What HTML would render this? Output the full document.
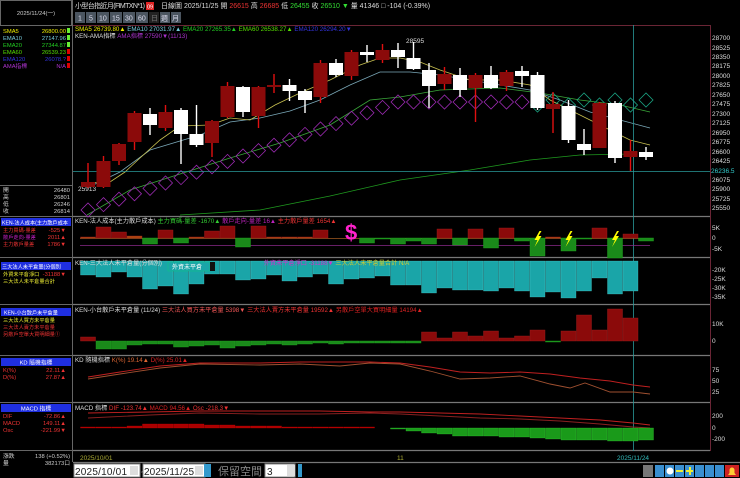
<!DOCTYPE html>
<html><head><meta charset="utf-8"><style>
html,body{margin:0;padding:0;background:#000;width:740px;height:478px;overflow:hidden}
svg{display:block;font-size:6.5px}
text{font-family:"Liberation Sans","Noto Sans CJK TC",sans-serif}
</style></head><body>
<svg id="s" width="740" height="478" viewBox="0 0 740 478" xmlns="http://www.w3.org/2000/svg">
<defs><clipPath id="lc"><rect x="0" y="0" width="72" height="478"/></clipPath></defs>
<rect width="740" height="478" fill="#000"/>
<g fill="none" stroke="#666" stroke-width="1">
<rect x="0.5" y="0.5" width="71" height="25"/>
<line x1="72.5" y1="0" x2="72.5" y2="462"/>
<line x1="0" y1="185.5" x2="72" y2="185.5"/>
<line x1="0" y1="216.5" x2="72" y2="216.5"/>
<line x1="0" y1="257.5" x2="72" y2="257.5"/>
<line x1="0" y1="304.5" x2="72" y2="304.5"/>
<line x1="0" y1="355.5" x2="72" y2="355.5"/>
<line x1="0" y1="402.5" x2="72" y2="402.5"/>
<line x1="0" y1="450.5" x2="72" y2="450.5"/>
</g>
<g stroke="#777" stroke-width="1.2">
<line x1="73" y1="216.5" x2="710" y2="216.5"/>
<line x1="73" y1="257.5" x2="710" y2="257.5"/>
<line x1="73" y1="304.5" x2="710" y2="304.5"/>
<line x1="73" y1="355.5" x2="710" y2="355.5"/>
<line x1="73" y1="402.5" x2="710" y2="402.5"/>
<line x1="73" y1="450.5" x2="710" y2="450.5"/>
<line x1="73" y1="462.5" x2="740" y2="462.5"/>
</g>
<line x1="73" y1="25.5" x2="710" y2="25.5" stroke="#6a2535"/>
<line x1="710.5" y1="25" x2="710.5" y2="451" stroke="#6a2535"/>
<g clip-path="url(#lc)" font-size="5.8">
<text x="36" y="15" fill="#ccc" text-anchor="middle">2025/11/24(一)</text>
<text x="3" y="33" fill="#ee0">SMA5</text><text x="66" y="33" fill="#ee0" text-anchor="end">26800.00</text>
<text x="3" y="40" fill="#7cd">EMA10</text><text x="66" y="40" fill="#7cd" text-anchor="end">27147.96</text>
<text x="3" y="47" fill="#2c2">EMA20</text><text x="66" y="47" fill="#2c2" text-anchor="end">27344.87</text>
<text x="3" y="54" fill="#5d0">EMA60</text><text x="66" y="54" fill="#5d0" text-anchor="end">26539.23</text>
<text x="3" y="61" fill="#33d">EMA120</text><text x="66" y="61" fill="#33d" text-anchor="end">26078.?</text>
<text x="3" y="68" fill="#a3c">AMA指標</text><text x="66" y="68" fill="#a3c" text-anchor="end">N/A</text>
<g fill="#67ee34"><rect x="67" y="28" width="3" height="5"/><rect x="67" y="35" width="3" height="5"/><rect x="67" y="42" width="3" height="5"/></g>
<g fill="#d00"><rect x="67" y="49" width="3" height="5"/><rect x="67" y="56" width="3" height="5"/><rect x="67" y="63" width="3" height="5"/></g>
<text x="3" y="192" fill="#ccc">開</text><text x="70" y="192" fill="#ccc" text-anchor="end">26480</text>
<text x="3" y="199" fill="#ccc">高</text><text x="70" y="199" fill="#ccc" text-anchor="end">26801</text>
<text x="3" y="206" fill="#ccc">低</text><text x="70" y="206" fill="#ccc" text-anchor="end">26246</text>
<text x="3" y="213" fill="#ccc">收</text><text x="70" y="213" fill="#ccc" text-anchor="end">26814</text>
<rect x="1" y="218" width="70" height="8" fill="#1f2fe0"/><text x="2" y="224.5" fill="#fff" font-size="5.2">KEN-法人成本(主力散戶成本</text>
<text x="3" y="232" fill="#e33" font-size="5.2">主力買碼-量差</text><text x="66" y="232" fill="#e33" text-anchor="end">-525▼</text>
<text x="3" y="239" fill="#c2c" font-size="5.2">散戶走向-量差</text><text x="66" y="239" fill="#e33" text-anchor="end">2011▲</text>
<text x="3" y="246" fill="#e33" font-size="5.2">主力散戶量差</text><text x="66" y="246" fill="#e33" text-anchor="end">1786▼</text>
<rect x="1" y="262" width="70" height="8" fill="#1f2fe0"/><text x="2" y="268.5" fill="#fff" font-size="5.2">三大法人未平倉量(分個別</text>
<text x="3" y="276" fill="#ee3" font-size="5.2">外資未平倉淨口</text><text x="66" y="276" fill="#e33" text-anchor="end">-31188▼</text>
<text x="3" y="283" fill="#ee3" font-size="5.2">三大法人未平倉量合計</text>
<rect x="1" y="308" width="70" height="8" fill="#1f2fe0"/><text x="4" y="314.5" fill="#fff" font-size="5.2">KEN-小台散戶未平倉量</text>
<text x="3" y="322" fill="#ee3" font-size="5.2">三大法人買方未平倉量</text>
<text x="3" y="329" fill="#e33" font-size="5.2">三大法人賣方未平倉量</text>
<text x="3" y="336" fill="#e33" font-size="5.2">另散戶空單大買明細量①</text>
<rect x="1" y="358" width="70" height="8" fill="#1f2fe0"/><text x="36" y="364.5" fill="#fff" text-anchor="middle">KD 隨機指標</text>
<text x="3" y="372" fill="#e33">K(%)</text><text x="66" y="372" fill="#e33" text-anchor="end">22.11▲</text>
<text x="3" y="379" fill="#e33">D(%)</text><text x="66" y="379" fill="#e33" text-anchor="end">27.87▲</text>
<rect x="1" y="404" width="70" height="8" fill="#1f2fe0"/><text x="36" y="410.5" fill="#fff" text-anchor="middle">MACD 指標</text>
<text x="3" y="418" fill="#e33">DIF</text><text x="66" y="418" fill="#e33" text-anchor="end">-72.86▲</text>
<text x="3" y="425" fill="#e33">MACD</text><text x="66" y="425" fill="#e33" text-anchor="end">149.11▲</text>
<text x="3" y="432" fill="#e33">Osc</text><text x="66" y="432" fill="#e33" text-anchor="end">-221.99▼</text>
<text x="3" y="458" fill="#ccc">漲跌</text><text x="70" y="458" fill="#ccc" text-anchor="end">138 (+0.52%)</text>
<text x="3" y="465" fill="#ccc">量</text><text x="70" y="465" fill="#ccc" text-anchor="end">382173口</text>
</g>
<text x="75" y="8" fill="#ddd" font-size="7" textLength="70">小型台指近月(FIMTXN*1)</text>
<rect x="146" y="2" width="8" height="8" fill="#d22"/><text x="147" y="8.5" fill="#fff" font-size="5.5">09</text>
<text x="161" y="8" fill="#ddd" font-size="7">日線圖  2025/11/25  開 <tspan fill="#e33">26615</tspan>  高 <tspan fill="#e33">26685</tspan>  低 <tspan fill="#3d3">26455</tspan>  收 <tspan fill="#3d3">26510 ▼</tspan> 量 41346 □  -104 (-0.39%)</text>
<g font-size="7" fill="#dde">
<rect x="75" y="12" width="10" height="11" fill="#4b5560"/><text x="78" y="20.5">1</text>
<rect x="86" y="12" width="10" height="11" fill="#4b5560"/><text x="89" y="20.5">5</text>
<rect x="97" y="12" width="12" height="11" fill="#4b5560"/><text x="99" y="20.5">10</text>
<rect x="110" y="12" width="12" height="11" fill="#4b5560"/><text x="112" y="20.5">15</text>
<rect x="123" y="12" width="12" height="11" fill="#4b5560"/><text x="125" y="20.5">30</text>
<rect x="136" y="12" width="12" height="11" fill="#4b5560"/><text x="138" y="20.5">60</text>
<rect x="149" y="12" width="10" height="11" fill="#222"/><text x="151" y="20.5" fill="#777">日</text>
<rect x="160" y="12" width="10" height="11" fill="#4b5560"/><text x="161" y="20.5">週</text>
<rect x="171" y="12" width="10" height="11" fill="#4b5560"/><text x="172" y="20.5">月</text>
</g>
<text x="75" y="31" font-size="6.2"><tspan fill="#ee0">SMA5 26739.80▲</tspan>  <tspan fill="#7cd">EMA10 27031.97▲</tspan>  <tspan fill="#2c2">EMA20 27265.35▲</tspan>  <tspan fill="#5d0">EMA60 26538.27▲</tspan>  <tspan fill="#33d">EMA120 26294.20▼</tspan></text>
<text x="75" y="38" font-size="6.2" fill="#ddd">KEN-AMA指標     <tspan fill="#a3c">AMA指標 27590▼(11/13)</tspan></text>
<text x="406" y="43" fill="#ddd" font-size="6.5">28595</text>
<text x="78" y="191" fill="#ddd" font-size="6.5">25913</text>
<g fill="#ddd" font-size="6.5">
<text x="712" y="40">28700</text><text x="712" y="50">28525</text><text x="712" y="59">28350</text><text x="712" y="68">28175</text><text x="712" y="78">28000</text><text x="712" y="87">27825</text><text x="712" y="97">27650</text><text x="712" y="106">27475</text><text x="712" y="116">27300</text><text x="712" y="125">27125</text><text x="712" y="135">26950</text><text x="712" y="144">26775</text><text x="712" y="154">26600</text><text x="712" y="163">26425</text><text x="711" y="173" fill="#3cc">26236.5</text><text x="712" y="182">26075</text><text x="712" y="191">25900</text><text x="712" y="201">25725</text><text x="712" y="210">25550</text>
<text x="712" y="230">5K</text><text x="712" y="240">0</text><text x="712" y="251">-5K</text>
<text x="712" y="272">-20K</text><text x="712" y="281">-25K</text><text x="712" y="290">-30K</text><text x="712" y="299">-35K</text>
<text x="712" y="326">10K</text><text x="712" y="343">0</text>
<text x="712" y="372">75</text><text x="712" y="383">50</text><text x="712" y="394">25</text>
<text x="712" y="418">200</text><text x="712" y="430">0</text><text x="712" y="441">-200</text>
</g>
<g id="dyn"></g>
<text x="75" y="223" font-size="6.2" fill="#ddd">KEN-法人成本(主力散戶成本)   <tspan fill="#3c3">主力買碼-量差 -1670▲</tspan>  <tspan fill="#b2b">散戶走向-量差 16▲</tspan>  <tspan fill="#e33">主力散戶量差 1654▲</tspan></text>
<text x="345" y="240" font-size="22" fill="#f2c" font-weight="bold">$</text>
<text x="75" y="265" font-size="6.2" fill="#ddd">KEN-三大法人未平倉量(分個別) <tspan fill="#c3c" dx="100">外資未平倉淨口 -31188▼</tspan>  <tspan fill="#cc3">三大法人未平倉量合計 N/A</tspan></text>
<rect x="168" y="262" width="42" height="9" fill="#1aa5a8" stroke="#0d6" stroke-width="0.3"/><text x="172" y="269" font-size="6" fill="#fff">外資未平倉</text>
<rect x="210" y="262" width="5" height="9" fill="#111"/>
<text x="75" y="312" font-size="6.2" fill="#ddd">KEN-小台散戶未平倉量  (11/24)   <tspan fill="#e55">三大法人買方未平倉量 5398▼</tspan>  <tspan fill="#e33">三大法人賣方未平倉量 19592▲</tspan>  <tspan fill="#d22">另散戶空單大買明細量 14194▲</tspan></text>
<text x="75" y="362" font-size="6.2" fill="#ddd">KD 隨機指標    <tspan fill="#d63">K(%) 19.14▲</tspan>  <tspan fill="#d22">D(%) 25.01▲</tspan></text>
<text x="75" y="410" font-size="6.2" fill="#ddd">MACD 指標    <tspan fill="#e33">DIF -123.74▲</tspan>  <tspan fill="#d22">MACD 94.56▲</tspan>  <tspan fill="#e33">Osc -218.3▼</tspan></text>
<text x="80" y="460" font-size="6.5" fill="#aa3">2025/10/01</text>
<text x="397" y="460" font-size="6.5" fill="#aa3">11</text>
<text x="617" y="460" font-size="6.5" fill="#3bb">2025/11/24</text>
<rect x="74" y="464" width="66" height="13" fill="#fff" stroke="#888"/><text x="75" y="475" font-size="10" fill="#222" textLength="52">2025/10/01</text>
<rect x="130" y="466" width="8" height="9" fill="#ddd"/>
<text x="141" y="475" font-size="9" fill="#ccc">~</text>
<rect x="143" y="464" width="62" height="13" fill="#fff" stroke="#888"/><text x="144" y="475" font-size="10" fill="#222" textLength="50">2025/11/25</text>
<rect x="195" y="466" width="8" height="9" fill="#ddd"/>
<rect x="204" y="464" width="7" height="13" fill="#39c"/>
<text x="218" y="475" font-size="11" fill="#888">保留空間</text>
<rect x="265" y="464" width="30" height="13" fill="#fff" stroke="#888"/><text x="267" y="475" font-size="10" fill="#222">3</text>
<rect x="287" y="465" width="8" height="11" fill="#ddd"/>
<rect x="298" y="464" width="4" height="13" fill="#39c"/>
<rect x="643" y="465" width="10" height="12" fill="#777"/>
<g fill="#3a8fd0"><rect x="655" y="465" width="9" height="12"/><rect x="665" y="465" width="9" height="12"/><rect x="675" y="465" width="9" height="12"/><rect x="685" y="465" width="9" height="12"/><rect x="695" y="465" width="9" height="12"/><rect x="705" y="465" width="9" height="12"/><rect x="715" y="465" width="9" height="12"/></g>
<circle cx="670" cy="471" r="3.5" fill="#fff"/><rect x="676" y="470" width="7" height="2" fill="#ee3"/><rect x="686" y="470" width="7" height="2" fill="#ee3"/><rect x="689" y="467" width="2" height="8" fill="#ee3"/>
<rect x="725" y="465" width="14" height="12" fill="#c22"/><path d="M728 475h8l-1.5-2v-3a2.5 2.5 0 0 0-5 0v3z" fill="#fc3"/>
</svg>
<script>
(function(){
var ns="http://www.w3.org/2000/svg",g=document.getElementById("dyn");
function el(t,a){var e=document.createElementNS(ns,t);for(var k in a)e.setAttribute(k,a[k]);g.appendChild(e);return e;}
var X=function(i){return 88+15.5*i;};
function pl(pts,c,w){el("polyline",{points:pts,fill:"none",stroke:c,"stroke-width":w||0.8});}
pl("180,215 260,210 330,196 400,180 470,170 530,160 580,155 633,154","#1f9a1f");
pl("87,215 130,190 180,174 230,158 280,143 330,125 370,100 400,97 440,90 500,88 540,93 580,100 620,105 650,112","#3aa83a");
pl("87,188 120,172 150,150 200,135 230,122 260,118 290,111 320,100 350,85 380,72 410,72 440,75 470,80 500,85 530,90 560,100 590,112 620,120 650,128","#7aa8b8");
pl("87,183 110,182 125,172 140,158 160,140 180,126 210,125 230,118 250,120 275,105 300,93 330,80 360,65 380,58 400,58 420,62 440,70 470,80 500,80 530,85 550,100 570,110 590,120 610,130 630,140 650,145","#c8c050");
for(var i=0;i<37;i++){var x=X(i),y;
 if(i<=20){y=210-(210-102)*(i/20);}else if(i<29)y=102;else y=100+((i%2)?5:0);
 var c=i<29?"#9a2ab0":"#1aa080";
 el("polygon",{points:(x-7)+","+y+" "+x+","+(y-7)+" "+(x+7)+","+y+" "+x+","+(y+7),fill:"none",stroke:c,"stroke-width":0.8});}
el("line",{x1:633.5,y1:25,x2:633.5,y2:451,stroke:"#2a9a9a","stroke-width":0.8});
el("line",{x1:73,y1:171.5,x2:710,y2:171.5,stroke:"#2a9a9a","stroke-width":0.8});
var C=[["r",182,187,163,188],["r",161,187,156,188],["r",144,161,143,165],["r",113,142,111,150],["w",114,125,108,135],["r",112,128,105,131],["w",110,134,108,164],["w",134,145,105,147],["r",121,143,120,157],["r",86,117,82,118],["w",87,112,86,117],["r",87,116,86,128],["r",85,87,74,93],["w",85,91,79,101],["w",91,100,89,113],["r",63,97,60,103],["w",63,75,59,77],["r",52,76,50,80],["w",52,55,45,62],["r",50,60,44,63],["w",50,57,43,68],["w",58,69,42,70],["w",70,86,63,108],["r",74,84,67,90],["w",75,90,68,97],["r",75,88,73,122],["w",75,88,66,89],["r",72,86,70,91],["w",71,76,66,87],["w",75,108,72,110],["r",104,109,92,133],["w",106,140,100,143],["w",144,150,129,155],["r",103,148,102,148],["w",103,158,101,163],["r",151,157,140,171],["w",152,157,147,160]];
C.forEach(function(c,i){var x=X(i),col=c[0]=="r"?"#8b0a0a":"#fff",wc=c[0]=="r"?"#e01010":"#fff";
 el("rect",{x:x-0.7,y:c[3],width:1.4,height:c[4]-c[3],fill:wc});
 el("rect",{x:x-7,y:c[1],width:14,height:Math.max(2,c[2]-c[1]),fill:col});});
el("line",{x1:80,y1:245.5,x2:650,y2:245.5,stroke:"#8a2a8a","stroke-width":0.8});
el("line",{x1:80,y1:238.5,x2:650,y2:238.5,stroke:"#a05a20","stroke-width":0.8});
var P1=[-1,-11,-6,-2,6,-8,5,-1,-7,-12,9,-12,-1,-1,-1,-8,0,0,5,1,6,3,6,-9,7,-9,10,-10,3,18,-1,13,1,-10,20,-4,3];
P1.forEach(function(v,i){var x=X(i);if(v==0)return;var c=v<0?(v>-3?"#b04a10":"#8b0a0a"):"#1a8a1a";
 el("rect",{x:x-7.5,y:v<0?238+v:238,width:15,height:Math.abs(v),fill:c,stroke:v<0?"#a02020":"#2a2","stroke-width":0.4});});
[29,31,34].forEach(function(i){var x=X(i);el("polygon",{points:(x+2)+",231 "+(x-3)+",240 "+x+",240 "+(x-3)+",247 "+(x+4)+",236 "+(x+1)+",236 "+(x+4)+",231",fill:"#ff0"});});
var P2=[275,277,272,277,289,286,294,284,274,274,280,279,275,281,277,274,284,279,278,276,285,285,293,288,290,290,291,288,291,297,292,298,291,278,294,291];
P2.forEach(function(v,i){var x=X(i);el("rect",{x:x-7.5,y:261,width:15,height:v-261,fill:"#1aa5a8",stroke:"#5cc","stroke-width":0.3});});
var P3=[-4,8,8,4,3,3,6,5,4,7,5,4,3,4,3,2,3,2,2,2,2,2,-9,-3,-9,-5,-10,-3,-5,-11,1,-10,-26,-11,-32,-23];
P3.forEach(function(v,i){var x=X(i);el("rect",{x:x-7.5,y:v<0?341+v:341,width:15,height:Math.abs(v),fill:v<0?"#8b0a0a":"#1a8a1a",stroke:v<0?"#a02020":"#2a2","stroke-width":0.4});});
pl("88,377 120,372 160,366 200,363 260,363 300,362 340,362 370,362 400,363 430,367 460,372 490,373 520,372 550,374 580,378 610,381 633,385 650,387","#c02020",0.9);
pl("88,379 120,374 160,368 200,364 260,365 300,364 340,366 370,363 400,364 430,371 460,379 490,378 520,376 550,384 570,388 585,383 610,392 633,392 650,394","#a05030",0.9);
pl("88,413 150,412 200,411 260,411 320,411 370,412 400,412 440,413 480,414 520,416 560,418 600,420 633,423 650,425","#c02020",0.9);
pl("88,418 150,415 200,413 260,414 320,414 370,413 400,414 440,416 480,418 520,419 560,421 600,424 633,427 650,428","#8a2020",0.9);
var P5=[-1,-1,-1,-2,-4,-4,-4,-4,-3,-3,-2,-2,-2,-1,-1,-1,-1,-1,-1,0,1,3,5,6,8,8,8,9,9,10,11,12,12,12,13,13,12];
P5.forEach(function(v,i){var x=X(i);if(v==0)return;el("rect",{x:x-7.5,y:v<0?428+v:428,width:15,height:Math.abs(v),fill:v<0?"#a00":"#1a9a1a",stroke:v<0?"#c00":"#3c3","stroke-width":0.3});});
})();
</script>
</body></html>
